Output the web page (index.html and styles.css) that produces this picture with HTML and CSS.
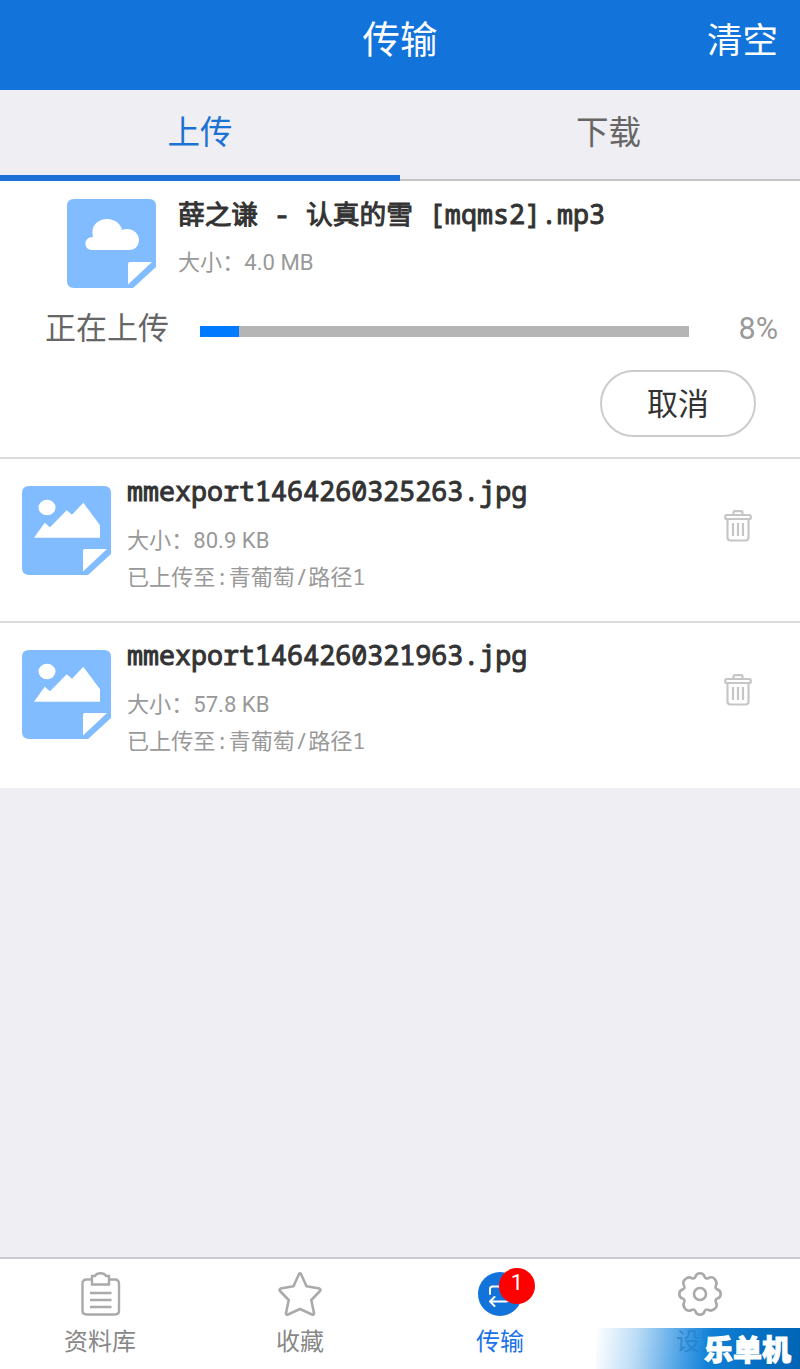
FILE: index.html
```html
<!DOCTYPE html>
<html lang="zh-CN">
<head>
<meta charset="utf-8">
<title>传输</title>
<link rel="stylesheet" href="styles.css">
</head>
<body>
<svg class="defs" width="0" height="0">
  <symbol id="picture" viewBox="0 0 89 89">
    <path fill="#80bcff" d="M7 0H82Q89 0 89 7V68L66 89H7Q0 89 0 82V7Q0 0 7 0Z"/>
    <ellipse cx="25" cy="21.5" rx="8.5" ry="7.8" fill="#fff"/>
    <path fill="#fff" d="M12 51.7 22.7 36.7 28 41.3 44.7 24.3 50 28.7 61.3 16.7 78 39.3V51.7ZM61 65Q61 63 63 63H85L61 85.5Z"/>
  </symbol>
  <symbol id="trash" viewBox="0 0 28 32">
    <g fill="none" stroke="#c6c6c6" stroke-width="2.200"><rect x="1.2" y="5" width="25.6" height="4" rx="1.5"/><path d="M9.500 5V2.500Q9.500 1.200 11 1.200H17Q18.500 1.200 18.500 2.500V5M3.500 9V27.500Q3.500 30.500 6.500 30.500H21.500Q24.500 30.500 24.500 27.500V9M9 13V26M14 13V26M19 13V26"/></g>
  </symbol>
</svg>
<div class="app">
  <header class="header"><span></span><h1 class="title">传输</h1><span class="clear">清空</span></header>
  <nav class="tabs"><span class="tab tab-active">上传</span><span class="tab">下载</span></nav>
  <main class="list">
    <section class="uploading">
      <div class="upload-file">
        <svg class="file-icon" viewBox="0 0 89 89"><path fill="#80bcff" d="M7 0H82Q89 0 89 7V68L66 89H7Q0 89 0 82V7Q0 0 7 0Z"/><path fill="#fff" d="M25 51C16 51 16 38 26 38C23 26 32 20 40 20C48 20 54 25 55 31C63 28 72 33 72 41C72 47 68 51 62 51ZM61 65Q61 63 63 63H85L61 85.500Z"/></svg>
        <div class="info"><div class="name">薛之谦 - 认真的雪 [mqms2].mp3</div><div class="size">大小：4.0 MB</div></div>
      </div>
      <div class="progress-row"><span class="status">正在上传</span><div class="track"><div class="bar" style="width:8%"></div></div><span class="percent">8%</span></div>
      <div class="actions"><span class="cancel">取消</span></div>
    </section>
    <section class="item">
      <svg class="file-icon"><use href="#picture"/></svg>
      <div class="info"><div class="name">mmexport1464260325263.jpg</div><div class="size">大小：80.9 KB</div><div class="path">已上传至:青葡萄/路径1</div></div>
      <svg class="trash"><use href="#trash"/></svg>
    </section>
    <section class="item item-last">
      <svg class="file-icon"><use href="#picture"/></svg>
      <div class="info"><div class="name">mmexport1464260321963.jpg</div><div class="size">大小：57.8 KB</div><div class="path">已上传至:青葡萄/路径1</div></div>
      <svg class="trash"><use href="#trash"/></svg>
    </section>
  </main>
  <footer class="nav">
    <div class="nav-item"><svg class="nav-icon" viewBox="0 0 44 44"><g fill="none" stroke="#aaa" stroke-width="2.400"><path d="M14 7.500H8.500Q4.500 7.500 4.500 11.500V38.500Q4.500 42.500 8.500 42.500H37Q41 42.500 41 38.500V11.500Q41 7.500 37 7.500H31"/><path d="M14 4H17Q18.500 1.300 22.500 1.300T28 4H31V12.500H14Z"/><path d="M12 21H33.500M12 28H33.500M12 35H33.500"/></g></svg><span class="nav-label">资料库</span></div>
    <div class="nav-item"><svg class="nav-icon" viewBox="0 0 44 44"><path fill="none" stroke="#aaa" stroke-width="2.600" stroke-linejoin="round" d="M21 2Q22 .8 23 2L28.500 14.300 41.500 16.500Q43.200 17.500 42 19L33.300 28 36 41.300Q36 43.200 34 42.500L22 37 10 42.500Q8 43.200 8 41.300L10.700 28 2 19Q.8 17.500 2.500 16.500L15.500 14.300Z"/></svg><span class="nav-label">收藏</span></div>
    <div class="nav-item nav-active"><div class="icon-wrap"><svg class="nav-icon" viewBox="0 0 44 44"><circle cx="22" cy="22" r="22" fill="#1273db"/><path fill="none" stroke="#fff" stroke-width="2" stroke-linecap="round" stroke-linejoin="round" d="M12 22V17Q12 14.500 14.500 14.500H28M16.500 25 12 29.500 16.500 34M12 29.500H28Q32 29.500 32 25V22"/></svg><span class="badge">1</span></div><span class="nav-label">传输</span></div>
    <div class="nav-item"><svg class="nav-icon" viewBox="0 0 44 44"><g fill="none" stroke="#aaa" stroke-width="2.600" stroke-linejoin="round"><path d="M17.500 4.500Q18.500 1.300 22 1.300T26.500 4.500Q27.500 7.500 30.500 6Q34 4 36.800 7.200T38 13.500Q36.500 16.500 39.500 17.500Q42.700 18.500 42.700 22T39.500 26.500Q36.500 27.500 38 30.500Q40 34 36.800 36.800T30.500 38Q27.500 36.500 26.500 39.500Q25.500 42.700 22 42.700T17.500 39.500Q16.500 36.500 13.500 38Q10 40 7.200 36.800T6 30.500Q7.500 27.500 4.500 26.500Q1.300 25.500 1.300 22T4.500 17.500Q7.500 16.500 6 13.500Q4 10 7.200 7.200T13.500 6Q16.500 7.500 17.500 4.500Z"/><circle cx="22" cy="22" r="6"/></g></svg><span class="nav-label">设置</span></div>
  </footer>
  <div class="watermark">乐单机</div>
</div>
</body>
</html>
```
FILE: styles.css
```css
* { box-sizing: border-box; }
body { margin: 0; font-family: Roboto, "Noto Sans CJK SC", sans-serif; background: #eeeef3; }
.defs { position: absolute; }
.app { position: relative; height: 1369px; display: flex; flex-direction: column; overflow: hidden; }
.header { height: 90px; padding: 0 22px 10px; display: grid; grid-template-columns: 1fr auto 1fr; align-items: center; background: #1273db; color: #fff; }
.title { margin: 0; font-size: 37.500px; font-weight: 400; line-height: 54px; }
.clear { padding-top: 1px; font-size: 35.500px; line-height: 54px; text-align: right; }
.tabs { height: 91px; display: flex; }
.tab { width: 50%; padding-left: 17px; border-bottom: 2px solid #c4c4c6; font-size: 32.500px; line-height: 86px; text-align: center; color: #666; }
.tab-active { padding-left: 0; border-bottom: 6px solid #1b6fd6; color: #1b72d3; }
.list { flex: 1; }
.uploading { height: 278px; padding: 18px 22px 0; border-bottom: 2px solid #dcdcdc; background: #fff; }
.upload-file { display: flex; gap: 22px; padding-left: 45px; }
.file-icon { flex: none; width: 89px; height: 89px; }
.name { font: 400 26.700px/30px "Noto Sans Mono", "DejaVu Sans Mono", "Noto Sans CJK SC", monospace; color: #333; -webkit-text-stroke: 1px #333; white-space: pre; }
.size { margin-top: 17px; font-size: 22.100px; line-height: 32px; color: #999; }
.path { font: 22.100px/32px "Noto Sans Mono", "DejaVu Sans Mono", "Noto Sans CJK SC", monospace; margin-top: 4px; color: #999; }
.progress-row { display: flex; align-items: center; height: 44px; margin-top: 18px; padding-left: 23px; }
.status { width: 155px; font-size: 31px; line-height: 44px; padding-top: 2px; color: #666; }
.track { width: 489px; height: 11px; margin-top: 6px; background: #b5b5b5; }
.bar { height: 100%; background: #007bff; }
.percent { flex: 1; text-align: right; font-size: 30.500px; color: #999; }
.actions { display: flex; justify-content: flex-end; margin-top: 20px; padding-right: 22px; }
.cancel { width: 156px; height: 67px; border: 2px solid #ccc; border-radius: 34px; font-size: 31px; line-height: 65px; text-align: center; color: #333; }
.item { display: flex; height: 164px; padding: 27px 48px 0 22px; border-bottom: 2px solid #dcdcdc; background: #fff; }
.item .info { flex: 1; margin: -10px 0 0 16px; }
.item .size { margin-top: 18px; }
.item-last { height: 165px; border: 0; }
.trash { width: 28px; height: 32px; margin-top: 24px; }
.nav { display: flex; height: 112px; padding-top: 13px; border-top: 2px solid #c9c9cc; background: #fff; }
.nav-item { flex: 1; display: flex; flex-direction: column; align-items: center; }
.nav-icon { display: block; width: 44px; height: 44px; }
.nav-label { margin-top: 8px; font-size: 24px; line-height: 36px; color: #888; }
.nav-active .nav-label { color: #1b72e8; }
.icon-wrap { position: relative; }
.badge { position: absolute; left: 21px; top: -4px; width: 36px; height: 36px; border-radius: 50%; background: #f00; color: #fff; font-size: 22px; line-height: 30px; text-align: center; }
.watermark { position: absolute; right: 0; bottom: 0; width: 204px; height: 41px; padding-right: 9px; background: linear-gradient(97deg, rgba(30,140,225,0) 0%, rgba(30,140,225,.3) 20%, rgba(25,135,222,.82) 44%, #0f80d6 56%, #0670c4 78%, #0064b4 100%); color: #fff; font: 900 29px/41px "Noto Sans CJK SC", sans-serif; -webkit-text-stroke: 1px #fff; text-align: right; }
```
